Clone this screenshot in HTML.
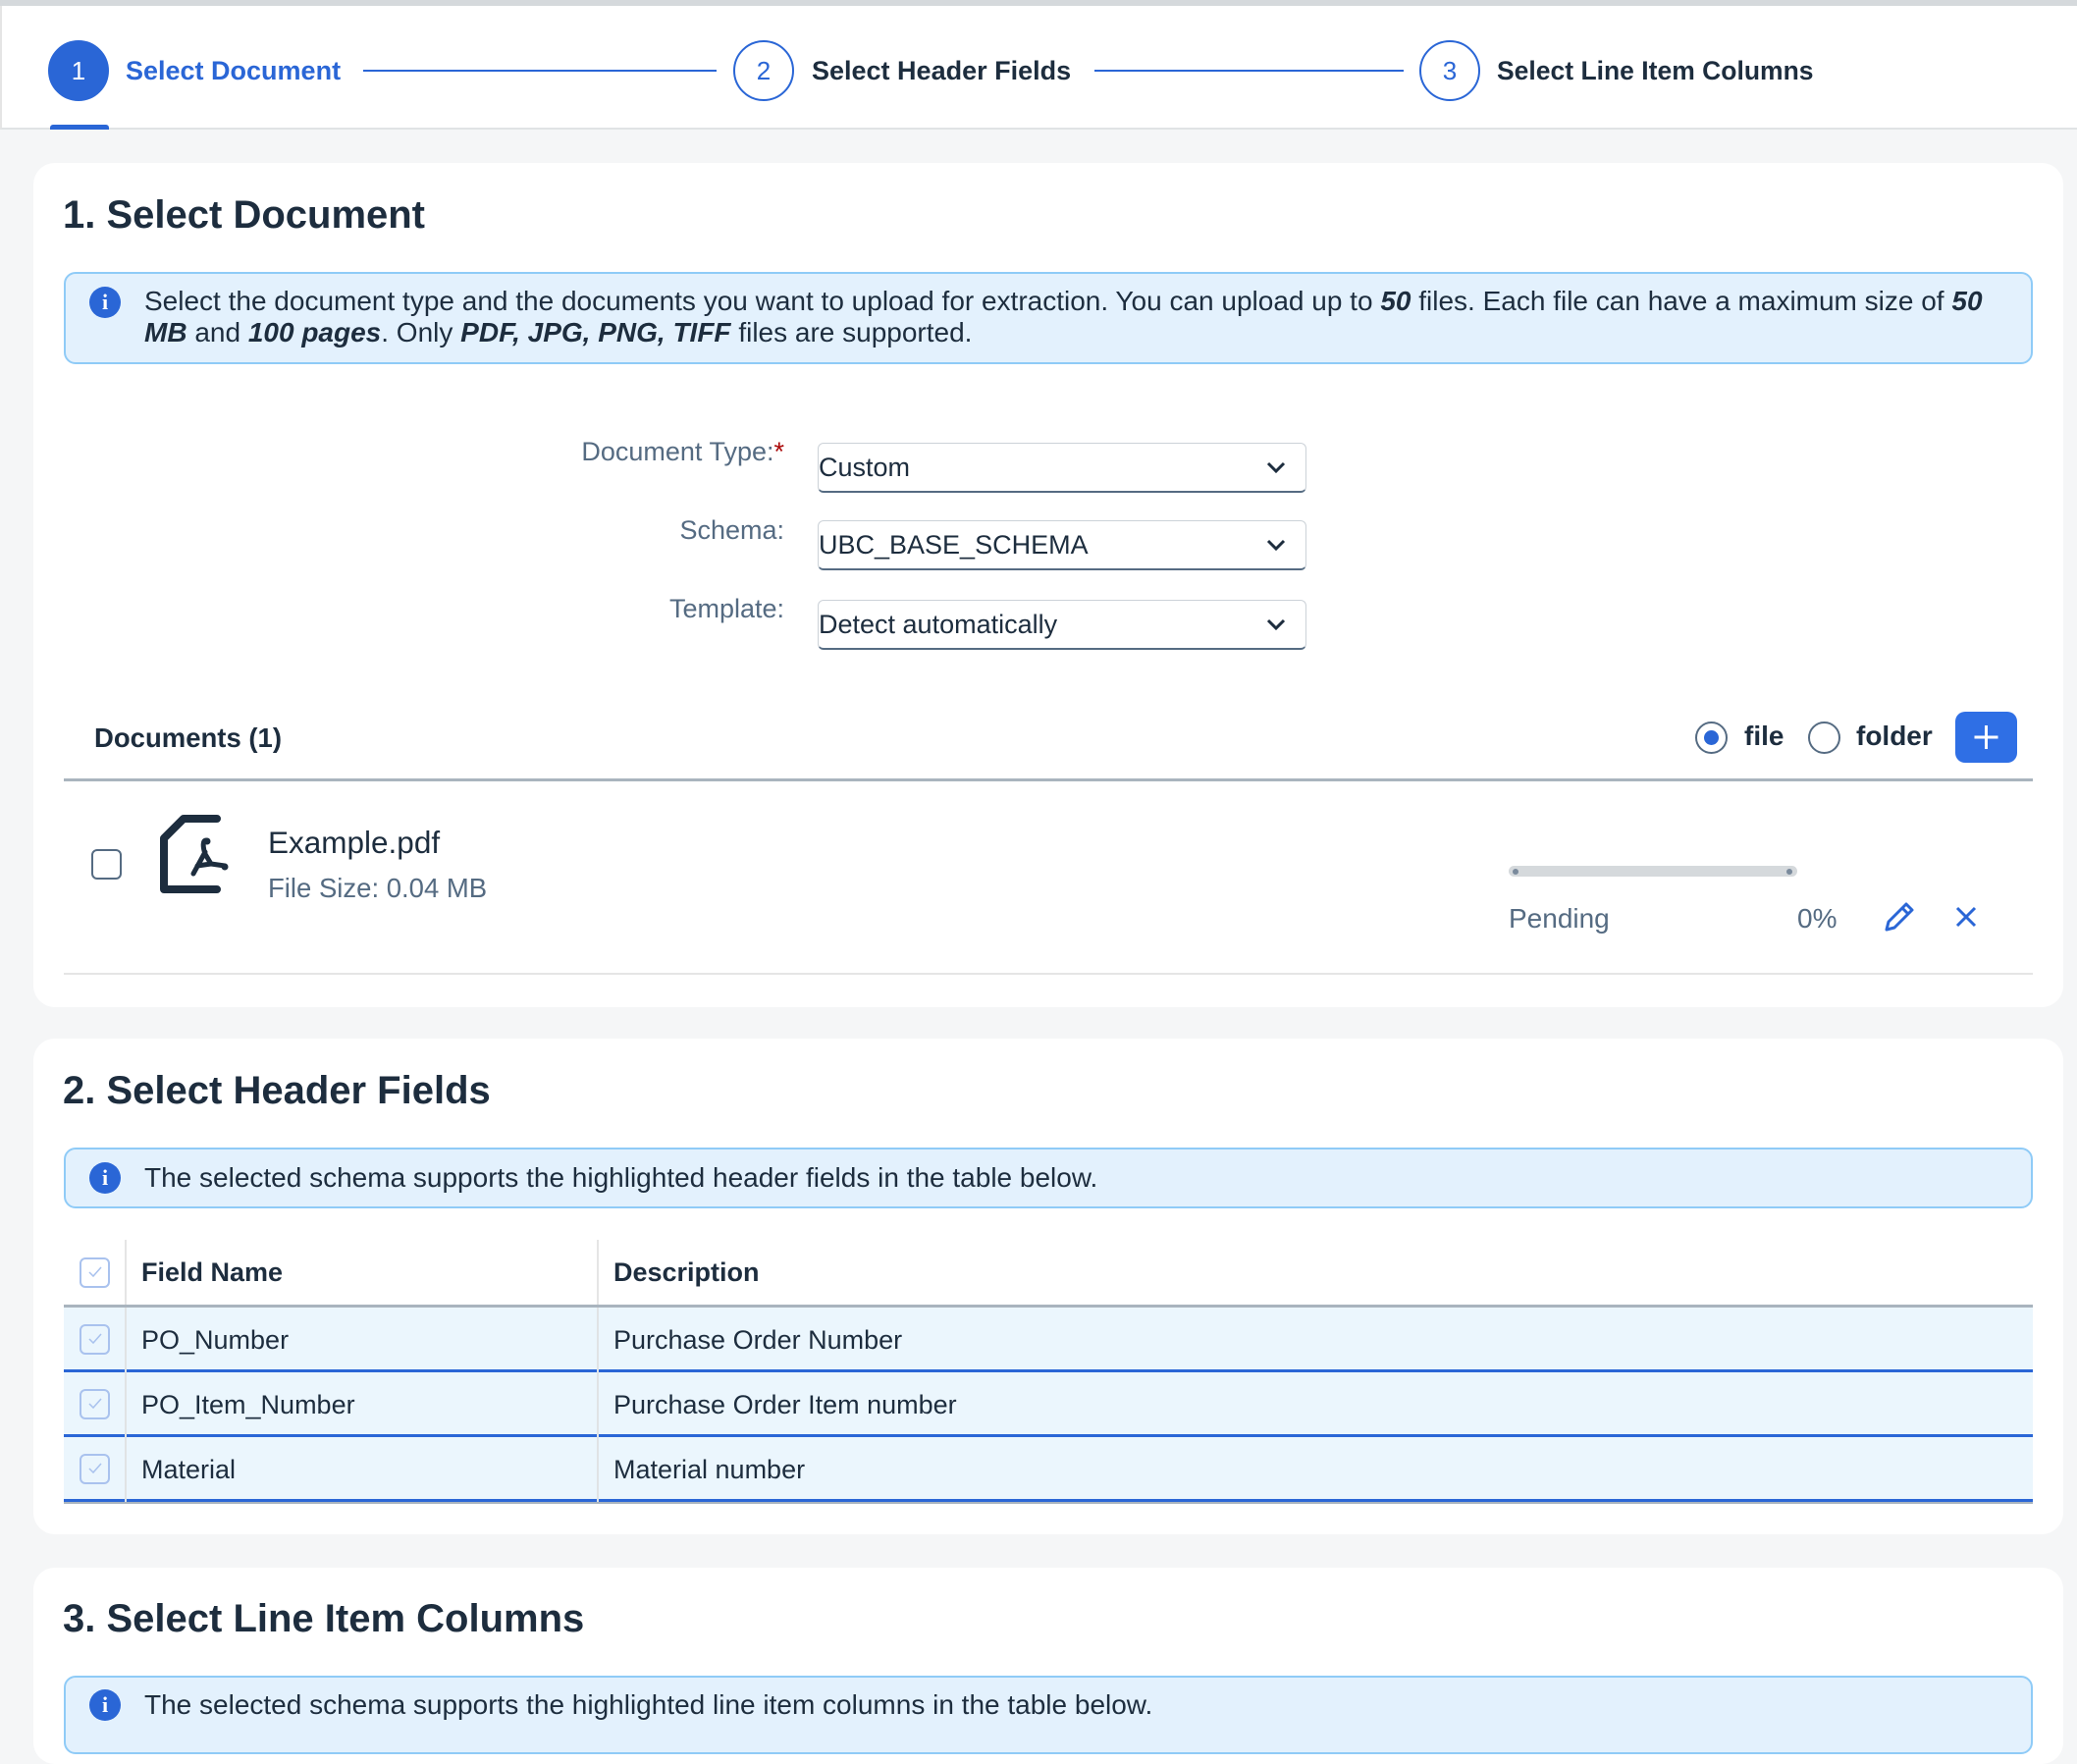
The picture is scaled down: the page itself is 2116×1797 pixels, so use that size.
<!DOCTYPE html>
<html><head><meta charset="utf-8">
<style>
*{box-sizing:border-box;margin:0;padding:0}
body{width:2116px;height:1756px;overflow:hidden;background:#f5f6f7;font-family:"Liberation Sans",Arial,sans-serif;color:#1d2d3e;position:relative}
.a{position:absolute}
.top{left:0;top:0;width:2116px;height:6px;background:#d5d9dc}
.hdr{left:0;top:6px;width:2116px;height:126px;background:#fff;border-bottom:2px solid #e0e3e5;border-left:2px solid #e5e5e5}
.circ{width:62px;height:62px;border-radius:50%;border:2px solid #2a66d6;color:#2a66d6;font-size:26px;display:flex;align-items:center;justify-content:center}
.stxt{font-size:26px;font-weight:bold;white-space:nowrap;line-height:30px}
.sline{height:2px;background:#2a66d6}
.card{left:34px;width:2068px;background:#fff;border-radius:22px}
h2{position:absolute;font-size:40px;font-weight:bold;color:#1d2d3e;white-space:nowrap}
.info{left:65px;width:2006px;background:#e3f1fd;border:2px solid #8fcbf7;border-radius:12px;color:#1d2d3e;white-space:nowrap}
.ii{width:32px;height:32px;border-radius:50%;background:#2a66d6;color:#fff;font-weight:bold;font-size:22px;text-align:center;line-height:32px;font-family:"Liberation Serif",serif}
.lbl{font-size:26px;color:#556b82;text-align:right;width:400px;white-space:nowrap}
.dd{left:833px;width:498px;height:51px;border:1px solid #ccd2d8;border-bottom:2px solid #556b82;border-radius:6px;font-size:27px;line-height:48px;color:#1d2d3e;white-space:nowrap}
.dd svg{position:absolute;right:20px;top:17px}
.row{left:65px;width:2006px;height:66px;background:#ebf6fd;border-bottom:3px solid #2a66d6}
.cb{width:31px;height:31px;border:2px solid #a9c2ee;border-radius:6px}
.cb svg{position:absolute;left:6px;top:6px}
.cell{font-size:27px;white-space:nowrap}
</style></head><body>
<div class="a top"></div>
<div class="a hdr"></div>
<div class="a" style="left:51px;top:127px;width:60px;height:5px;background:#2a66d6;border-radius:3px 3px 0 0"></div>
<div class="a circ" style="left:49px;top:41px;background:#2a66d6;color:#fff">1</div>
<div class="a stxt" style="left:128px;top:57px;color:#2a66d6;font-size:27px">Select Document</div>
<div class="a sline" style="left:370px;top:71px;width:360px"></div>
<div class="a circ" style="left:747px;top:41px">2</div>
<div class="a stxt" style="left:827px;top:57px;font-size:27px">Select Header Fields</div>
<div class="a sline" style="left:1115px;top:71px;width:315px"></div>
<div class="a circ" style="left:1446px;top:41px">3</div>
<div class="a stxt" style="left:1525px;top:57px;font-size:26.5px">Select Line Item Columns</div>

<!-- card1 -->
<div class="a card" style="top:166px;height:860px"></div>
<h2 style="left:64px;top:197px">1. Select Document</h2>
<div class="a info" style="top:277px;height:94px"></div>
<div class="a ii" style="left:91px;top:292px">i</div>
<div class="a" style="left:147px;top:291px;font-size:28px;line-height:32px;white-space:nowrap">Select the document type and the documents you want to upload for extraction. You can upload up to <b><i>50</i></b> files. Each file can have a maximum size of <b><i>50</i></b><br><b><i>MB</i></b> and <b><i>100 pages</i></b>. Only <b><i>PDF, JPG, PNG, TIFF</i></b> files are supported.</div>

<div class="a lbl" style="left:399px;top:445px;font-size:27px">Document Type:<span style="color:#aa0808">*</span></div>
<div class="a lbl" style="left:399px;top:525px;font-size:27px">Schema:</div>
<div class="a lbl" style="left:399px;top:605px;font-size:27px">Template:</div>
<div class="a dd" style="top:451px">Custom<svg width="20" height="14"><path d="M2 3l8 8 8-8" stroke="#1d2d3e" stroke-width="3" fill="none"/></svg></div>
<div class="a dd" style="top:530px">UBC_BASE_SCHEMA<svg width="20" height="14"><path d="M2 3l8 8 8-8" stroke="#1d2d3e" stroke-width="3" fill="none"/></svg></div>
<div class="a dd" style="top:611px">Detect automatically<svg width="20" height="14"><path d="M2 3l8 8 8-8" stroke="#1d2d3e" stroke-width="3" fill="none"/></svg></div>

<div class="a" style="left:96px;top:736px;font-size:27.5px;font-weight:bold">Documents (1)</div>
<div class="a" style="left:1727px;top:735px;width:33px;height:33px;border-radius:50%;border:2px solid #556b82"><div style="position:absolute;left:7px;top:7px;width:15px;height:15px;border-radius:50%;background:#2a66d6"></div></div>
<div class="a" style="left:1777px;top:734px;font-size:28px;font-weight:bold">file</div>
<div class="a" style="left:1842px;top:735px;width:33px;height:33px;border-radius:50%;border:2px solid #556b82"></div>
<div class="a" style="left:1891px;top:734px;font-size:28px;font-weight:bold">folder</div>
<div class="a" style="left:1992px;top:725px;width:63px;height:52px;border-radius:10px;background:#2f6fe5"><svg width="63" height="52"><path d="M31.5 14v24M19.5 26h24" stroke="#fff" stroke-width="3"/></svg></div>
<div class="a" style="left:65px;top:793px;width:2006px;height:3px;background:#a9b4be"></div>

<div class="a cb" style="left:93px;top:865px;border-color:#556b82;border-width:2px"></div>
<svg class="a" style="left:155px;top:826px" width="90" height="90"><path d="M66 8H32L12 28V80H66" stroke="#1d2d3e" stroke-width="8" fill="none" stroke-linecap="round" stroke-linejoin="round"/><path d="M55 30c-3 0-4 5-1 14l6 10M54 42l-12 22M46 56l14-2 14 2" stroke="#1d2d3e" stroke-width="5" fill="none" stroke-linecap="round" stroke-linejoin="round"/><circle cx="56" cy="31" r="3.5" fill="#1d2d3e"/><circle cx="74" cy="57" r="3.5" fill="#1d2d3e"/></svg>
<div class="a" style="left:273px;top:840px;font-size:31.5px">Example.pdf</div>
<div class="a" style="left:273px;top:889px;font-size:27.5px;color:#556b82">File Size: 0.04 MB</div>
<div class="a" style="left:1537px;top:882px;width:294px;height:11px;border-radius:6px;background:#d5d9dc"></div>
<div class="a" style="left:1541px;top:885px;width:6px;height:6px;border-radius:50%;background:#7a8a9c"></div>
<div class="a" style="left:1820px;top:885px;width:6px;height:6px;border-radius:50%;background:#7a8a9c"></div>
<div class="a" style="left:1537px;top:920px;font-size:28px;color:#556b82">Pending</div>
<div class="a" style="left:1831px;top:920px;font-size:28px;color:#556b82">0%</div>
<svg class="a" style="left:1918px;top:915px" width="34" height="36"><path d="M4 32l2-8L24 6l6 6-18 18zM20 10l6 6" stroke="#2a66d6" stroke-width="3" fill="none" stroke-linejoin="round"/></svg>
<svg class="a" style="left:1991px;top:922px" width="24" height="24"><path d="M3 3l18 18M21 3L3 21" stroke="#2a66d6" stroke-width="3"/></svg>
<div class="a" style="left:65px;top:991px;width:2006px;height:2px;background:#e5e5e5"></div>

<!-- card2 -->
<div class="a card" style="top:1058px;height:505px"></div>
<h2 style="left:64px;top:1089px">2. Select Header Fields</h2>
<div class="a info" style="top:1169px;height:62px"></div>
<div class="a ii" style="left:91px;top:1184px">i</div>
<div class="a" style="left:147px;top:1184px;font-size:28px;line-height:32px;white-space:nowrap">The selected schema supports the highlighted header fields in the table below.</div>

<div class="a" style="left:127px;top:1263px;width:2px;height:266px;background:#e5e5e5"></div>
<div class="a" style="left:608px;top:1263px;width:2px;height:266px;background:#e5e5e5"></div>
<div class="a cb" style="left:81px;top:1281px"><svg width="16" height="14"><path d="M2 7l4 4 8-9" stroke="#a9c2ee" stroke-width="1.5" fill="none"/></svg></div>
<div class="a cell" style="left:144px;top:1281px;font-weight:bold">Field Name</div>
<div class="a cell" style="left:625px;top:1281px;font-weight:bold">Description</div>
<div class="a" style="left:65px;top:1329px;width:2006px;height:3px;background:#a9b4be"></div>
<div class="a row" style="top:1332px"></div>
<div class="a row" style="top:1398px"></div>
<div class="a row" style="top:1464px;box-shadow:0 2px 0 #a9b4be"></div>
<div class="a" style="left:127px;top:1332px;width:2px;height:198px;background:#e0e3e5"></div>
<div class="a" style="left:608px;top:1332px;width:2px;height:198px;background:#e0e3e5"></div>
<div class="a cb" style="left:81px;top:1349px"><svg width="16" height="14"><path d="M2 7l4 4 8-9" stroke="#a9c2ee" stroke-width="1.5" fill="none"/></svg></div>
<div class="a cb" style="left:81px;top:1415px"><svg width="16" height="14"><path d="M2 7l4 4 8-9" stroke="#a9c2ee" stroke-width="1.5" fill="none"/></svg></div>
<div class="a cb" style="left:81px;top:1481px"><svg width="16" height="14"><path d="M2 7l4 4 8-9" stroke="#a9c2ee" stroke-width="1.5" fill="none"/></svg></div>
<div class="a cell" style="left:144px;top:1350px">PO_Number</div>
<div class="a cell" style="left:625px;top:1350px">Purchase Order Number</div>
<div class="a cell" style="left:144px;top:1416px">PO_Item_Number</div>
<div class="a cell" style="left:625px;top:1416px">Purchase Order Item number</div>
<div class="a cell" style="left:144px;top:1482px">Material</div>
<div class="a cell" style="left:625px;top:1482px">Material number</div>

<!-- card3 -->
<div class="a card" style="top:1597px;height:200px"></div>
<h2 style="left:64px;top:1627px">3. Select Line Item Columns</h2>
<div class="a info" style="top:1707px;height:80px"></div>
<div class="a ii" style="left:91px;top:1721px">i</div>
<div class="a" style="left:147px;top:1721px;font-size:28px;line-height:32px;white-space:nowrap">The selected schema supports the highlighted line item columns in the table below.</div>
</body></html>
